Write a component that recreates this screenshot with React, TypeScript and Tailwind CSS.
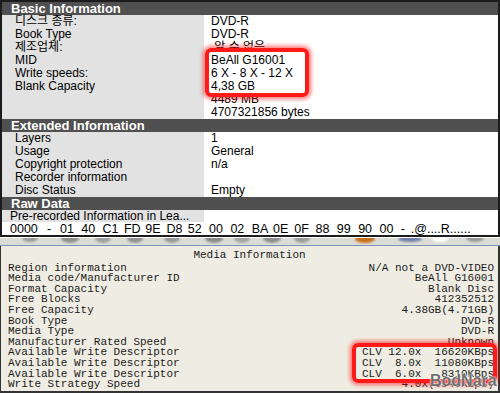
import React from "react";

const sans = { fontFamily: '"Liberation Sans", "Noto Sans CJK KR", Arial, sans-serif' };
const mono = { fontFamily: '"Liberation Mono", "Courier New", monospace' };

function Header({ title }: { title: string }) {
  return (
    <div className="h-[13px] bg-[#505050] pl-[9px] text-white font-bold text-[13px] leading-[13px] whitespace-nowrap">
      {title}
    </div>
  );
}

function Row({ label, value }: { label: string; value?: string }) {
  return (
    <div className="flex h-[13px] text-[12px] leading-[13px] text-black whitespace-pre">
      <div className="w-[202px] bg-[#e2e2e2] pl-[13px]">{label}</div>
      <div className="flex-1 bg-white pl-[7px]">{value ?? ""}</div>
    </div>
  );
}

const basic: [string, string][] = [
  ["디스크 종류:", "DVD-R"],
  ["Book Type", "DVD-R"],
  ["제조업체:", " 알 수 없음"],
  ["MID", "BeAll G16001"],
  ["Write speeds:", "6 X - 8 X - 12 X"],
  ["Blank Capacity", "4,38 GB"],
  ["", "4489 MB"],
  ["", "4707321856 bytes"],
];

const ext: [string, string][] = [
  ["Layers", "1"],
  ["Usage", "General"],
  ["Copyright protection", "n/a"],
  ["Recorder information", ""],
  ["Disc Status", "Empty"],
];

const bytes = ["01", "40", "C1", "FD", "9E", "D8", "52", "00", "02", "BA", "0E", "0F", "88", "99", "90", "00"];

const media: [string, string][] = [
  ["Region information", "N/A not a DVD-VIDEO"],
  ["Media code/Manufacturer ID", "BeAll G16001"],
  ["Format Capacity", "Blank Disc"],
  ["Free Blocks", "412352512"],
  ["Free Capacity", "4.38GB(4.71GB)"],
  ["Book Type", "DVD-R"],
  ["Media Type", "DVD-R"],
  ["Manufacturer Rated Speed", "Unknown"],
  ["Available Write Descriptor", "CLV 12.0x  16620KBps"],
  ["Available Write Descriptor", "CLV  8.0x  11080KBps"],
  ["Available Write Descriptor", "CLV  6.0x   8310KBps"],
  ["Write Strategy Speed", "4.0x(5540KBps)"],
];

export default function App() {
  return (
    <div className="relative w-[500px] h-[393px] bg-white overflow-hidden" style={sans}>
      {/* Top panel */}
      <div className="h-[237px] border-2 border-[#1c1c1c] flex flex-col">
        <Header title="Basic Information" />
        {basic.map(([l, v], i) => (
          <Row key={"b" + i} label={l} value={v} />
        ))}
        <Header title="Extended Information" />
        {ext.map(([l, v], i) => (
          <Row key={"e" + i} label={l} value={v} />
        ))}
        <Header title="Raw Data" />
        <div className="flex h-[12px] text-[12px] leading-[12px] text-black whitespace-pre">
          <div className="w-[202px] bg-[#e2e2e2] pl-[8px]">Pre-recorded Information in Lea...</div>
          <div className="flex-1 bg-white" />
        </div>
        <div className="flex h-[13px] bg-white pl-[8px] text-[12.5px] leading-[14px] text-black whitespace-pre">
          <span className="w-[37px]">0000</span>
          <span className="w-[13px]">-</span>
          {bytes.map((b, i) => (
            <span key={i} className="w-[21.3px] shrink-0">{b}</span>
          ))}
          <span className="w-[10px]">-</span>
          <span>.@....R......</span>
        </div>
      </div>

      {/* Bottom panel */}
      <div className="h-[156px] flex flex-col">
        <div className="h-[1px] bg-white" />
        <div className="h-[7px] bg-[#dcdcd6] relative overflow-hidden">
          <svg width="500" height="7" className="absolute left-0 top-0">
            <defs>
              <filter id="bl">
                <feGaussianBlur stdDeviation="1" />
              </filter>
            </defs>
            <g filter="url(#bl)">
              <ellipse cx="30" cy="0" rx="8" ry="4" fill="#9a9a9a" />
              <ellipse cx="70" cy="0" rx="9" ry="5" fill="#8f8f8f" />
              <ellipse cx="103" cy="0" rx="8" ry="5" fill="#a0a0a0" />
              <ellipse cx="135" cy="0" rx="8" ry="5" fill="#909090" />
              <ellipse cx="172" cy="0" rx="8" ry="5" fill="#9a9a9a" />
              <ellipse cx="214" cy="0" rx="9" ry="5" fill="#8a8a8a" />
              <ellipse cx="242" cy="0" rx="8" ry="5" fill="#a4a4a4" />
              <ellipse cx="272" cy="0" rx="9" ry="5" fill="#8e8e8e" />
              <ellipse cx="302" cy="0" rx="8" ry="5" fill="#9c9c9c" />
              <ellipse cx="365" cy="1" rx="10" ry="4" fill="#c8701c" />
              <ellipse cx="410" cy="1" rx="12" ry="3" fill="#6f7fa8" />
              <ellipse cx="440" cy="1" rx="8" ry="3" fill="#ffffff" />
              <ellipse cx="475" cy="0" rx="9" ry="4" fill="#9a9a9a" />
            </g>
          </svg>
        </div>
        <div className="h-[1px] bg-[#8190b4]" />
        <div className="flex-1 bg-[#efede3] border-l border-r-2 border-b-2 border-[#333] text-[11px] leading-[10.6px] text-[#1a1a1a] whitespace-pre pt-[4px]" style={mono}>
          <div className="text-center h-[10.6px] mb-[2px]">Media Information</div>
          {media.map(([l, v], i) => (
            <div key={i} className="flex justify-between h-[10.6px] pl-[7px] pr-[4px]">
              <span>{l}</span>
              <span>{v}</span>
            </div>
          ))}
        </div>
      </div>

      {/* Red highlight boxes */}
      <div className="absolute left-[205px] top-[48px] w-[104px] h-[49px] border-[4px] border-[#ff1a1a] rounded-[6px] shadow-[0_0_4px_2px_rgba(255,0,0,0.55)]" />
      <div className="absolute left-[352px] top-[343px] w-[145px] h-[40px] border-[4px] border-[#ff1a1a] rounded-[6px] shadow-[0_0_4px_2px_rgba(255,0,0,0.55)]" />

      {/* Watermark */}
      <div
        className="absolute left-[430px] top-[373px] text-[16px] font-bold text-[#4a4a4a]/80 leading-none [text-shadow:0_0_2px_#fff,0_0_2px_#fff]"
        style={sans}
      >
        BodNara
      </div>
    </div>
  );
}
